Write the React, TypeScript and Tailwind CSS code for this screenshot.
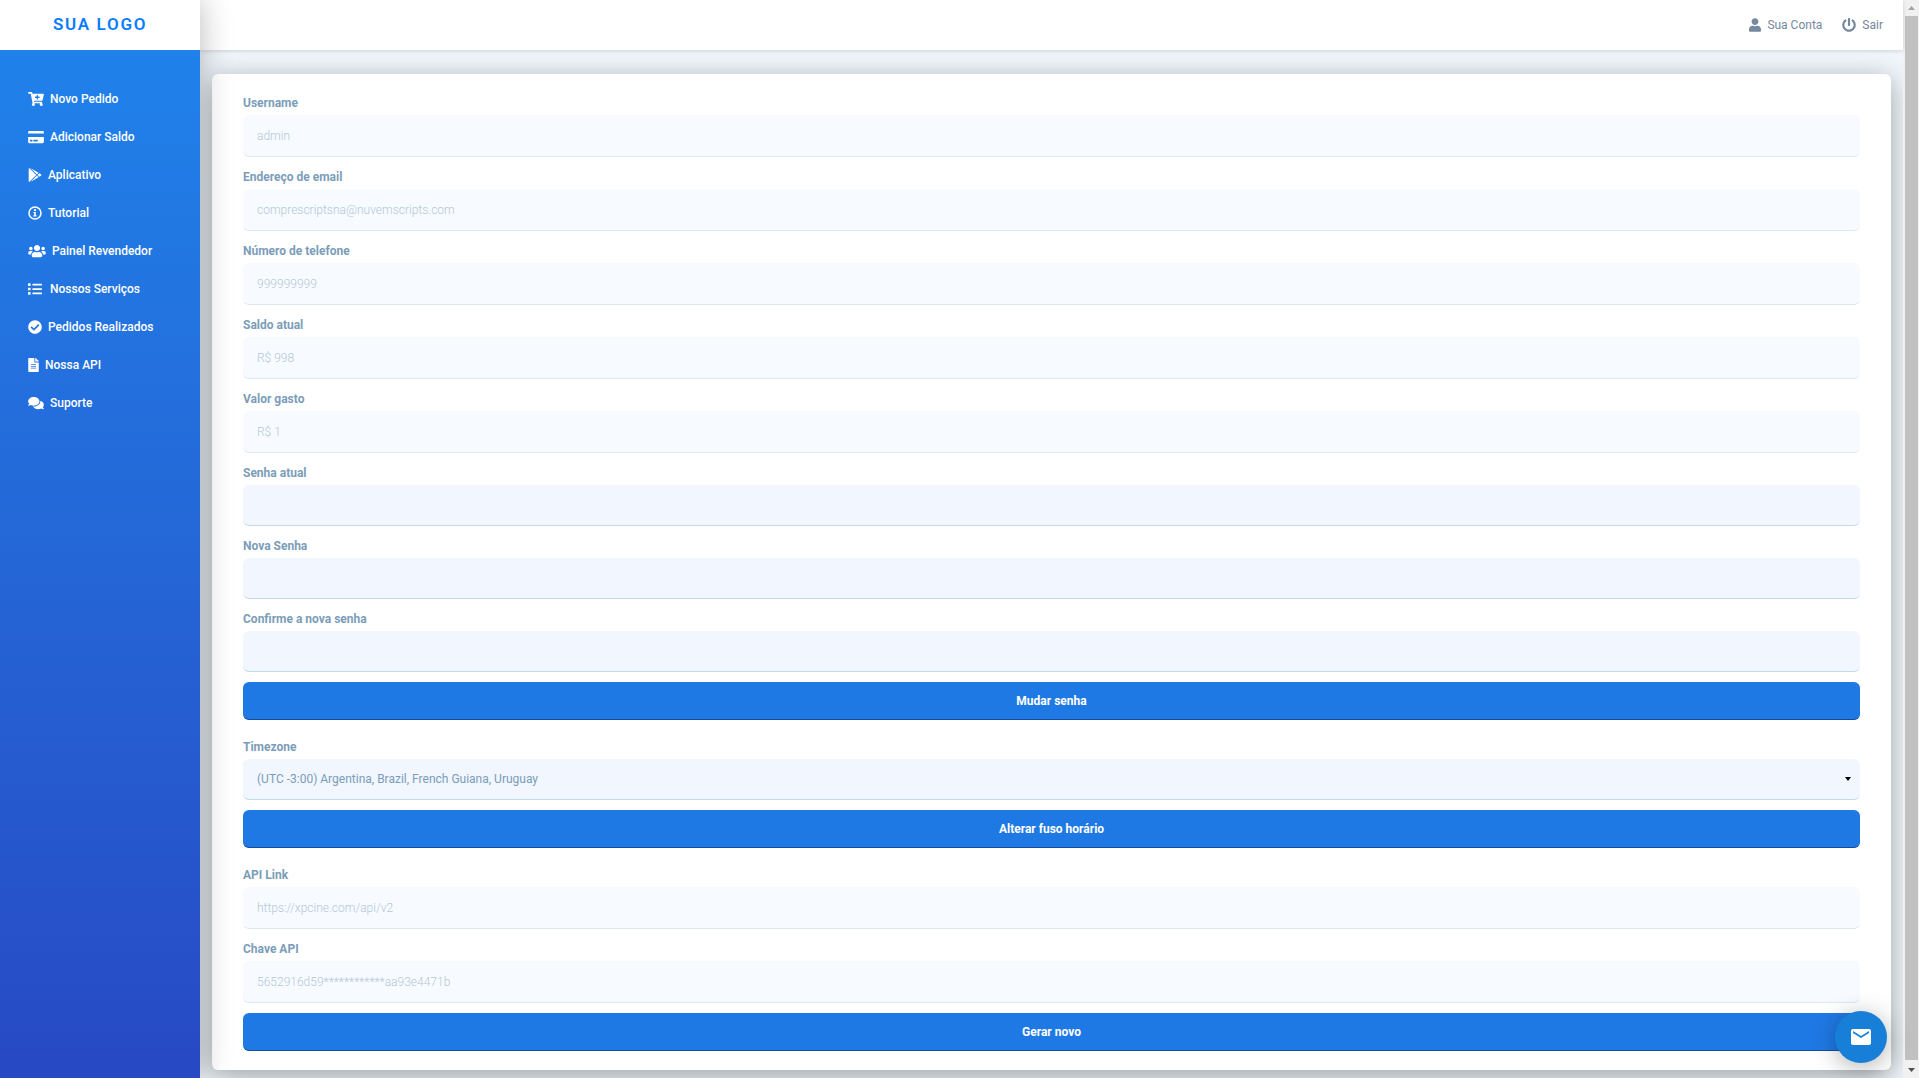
import type { ReactNode } from "react";
import {
  FaCartPlus,
  FaCheckCircle,
  FaComments,
  FaCreditCard,
  FaFileAlt,
  FaGooglePlay,
  FaList,
  FaPowerOff,
  FaUser,
  FaUsers,
} from "react-icons/fa";
import { MdEmail } from "react-icons/md";

// Circled "i" with a serifed stem
function InfoCircle({ className }: { className?: string }) {
  return (
    <svg viewBox="0 0 14 14" className={className} fill="none" aria-hidden="true">
      <circle cx="7" cy="7" r="6" stroke="currentColor" strokeWidth="1.5" />
      <path
        d="M7 3.1a1.1 1.1 0 1 0 0 2.2 1.1 1.1 0 0 0 0-2.2ZM5.4 5.9h2.4v3.4h.8v1.2H5.4V9.3h.8V7.1h-.8Z"
        fill="currentColor"
      />
    </svg>
  );
}

const menu = [
  { label: "Novo Pedido", icon: FaCartPlus, size: "w-4" },
  { label: "Adicionar Saldo", icon: FaCreditCard, size: "w-4" },
  { label: "Aplicativo", icon: FaGooglePlay, size: "w-3.5" },
  { label: "Tutorial", icon: InfoCircle, size: "w-3.5" },
  { label: "Painel Revendedor", icon: FaUsers, size: "w-[18px]" },
  { label: "Nossos Serviços", icon: FaList, size: "w-3.5 mr-0.5" },
  { label: "Pedidos Realizados", icon: FaCheckCircle, size: "w-3.5" },
  { label: "Nossa API", icon: FaFileAlt, size: "w-[11px]" },
  { label: "Suporte", icon: FaComments, size: "w-4" },
];

const account = [
  { id: "username", label: "Username", value: "admin" },
  { id: "email", label: "Endereço de email", value: "comprescriptsna@nuvemscripts.com" },
  { id: "phone", label: "Número de telefone", value: "999999999" },
  { id: "balance", label: "Saldo atual", value: "R$ 998" },
  { id: "spent", label: "Valor gasto", value: "R$ 1" },
];

const passwords = [
  { id: "current-password", label: "Senha atual" },
  { id: "new-password", label: "Nova Senha" },
  { id: "confirm-password", label: "Confirme a nova senha" },
];

const api = [
  { id: "api-link", label: "API Link", value: "https://xpcine.com/api/v2" },
  { id: "api-key", label: "Chave API", value: "5652916d59************aa93e4471b" },
];

function Field({ id, label, children }: { id: string; label: string; children: ReactNode }) {
  return (
    <div className="mb-2.5 flex flex-col">
      <label htmlFor={id} className="h-[22px] text-xs leading-5 font-bold text-[#7b9db9]">
        {label}
      </label>
      {children}
    </div>
  );
}

function ReadOnlyField({ id, label, value }: { id: string; label: string; value: string }) {
  return (
    <Field id={id} label={label}>
      <input
        id={id}
        type="text"
        value={value}
        disabled
        className="h-[42px] w-full rounded-md border-b border-[#dbe9f4] bg-[#f7fbff] px-3.5 text-xs font-light text-[#b4c7d7]"
      />
    </Field>
  );
}

function SubmitButton({ children }: { children: ReactNode }) {
  return (
    <button
      type="submit"
      className="h-[38px] w-full rounded-md border-b border-[#0f4f9c] bg-[#1f79e5] text-xs font-bold text-white"
    >
      {children}
    </button>
  );
}

function Sidebar() {
  return (
    <aside className="z-20 flex w-[200px] shrink-0 flex-col bg-linear-to-b from-[#1f84ec] to-[#2749c3] shadow-[0_0_30px_rgba(0,0,0,0.28)]">
      <a
        href="#"
        className="flex h-[50px] items-center justify-center bg-white text-[17px] font-semibold tracking-widest text-[#087cff]"
      >
        SUA LOGO
      </a>
      <nav className="flex flex-col pt-[30px]">
        {menu.map(({ label, icon: Icon, size }) => (
          <a
            key={label}
            href="#"
            className="flex h-[38px] items-center gap-1.5 pl-7 text-xs font-medium text-white"
          >
            <Icon className={`h-3.5 shrink-0 ${size}`} />
            {label}
          </a>
        ))}
      </nav>
    </aside>
  );
}

function Header() {
  return (
    <header className="z-10 flex h-[50px] shrink-0 items-center justify-end gap-5 bg-white px-5 text-xs text-[#75889d] shadow-[0_1px_4px_rgba(0,0,0,0.15)]">
      <a href="#" className="flex items-center gap-1.5">
        <FaUser className="h-3.5 w-3" />
        Sua Conta
      </a>
      <a href="#" className="flex items-center gap-1.5">
        <FaPowerOff className="size-3.5" />
        Sair
      </a>
    </header>
  );
}

function Scrollbar() {
  return (
    <div className="flex w-4 shrink-0 flex-col items-center bg-[#f1f1f1]" aria-hidden="true">
      <svg viewBox="0 0 16 16" className="size-4 shrink-0 text-[#a3a3a3]">
        <path d="M5 10h7L8.500 6Z" fill="currentColor" />
      </svg>
      <div className="w-[13px] flex-1 self-center bg-[#c1c1c1]" />
      <svg viewBox="0 0 16 18" className="h-[18px] w-4 shrink-0 text-[#505050]">
        <path d="M5 8h7l-3.500 4Z" fill="currentColor" />
      </svg>
    </div>
  );
}

export default function App() {
  return (
    <div className="flex h-screen overflow-hidden bg-[#f0f6fb] font-['Roboto',sans-serif]">
      <Sidebar />
      <div className="flex min-w-0 flex-1 flex-col">
        <Header />
        <main className="flex-1 px-3 pt-6">
          <section className="rounded-md bg-white px-[31px] py-[19px] shadow-[0_6px_28px_rgba(0,0,0,0.35)]">
            <form onSubmit={(e) => e.preventDefault()}>
              {account.map((field) => (
                <ReadOnlyField key={field.id} {...field} />
              ))}
              {passwords.map(({ id, label }) => (
                <Field key={id} id={id} label={label}>
                  <input
                    id={id}
                    type="password"
                    className="h-[41px] w-full rounded-md border-b border-[#c3dae9] bg-[#f1f6ff] px-3.5 text-xs"
                  />
                </Field>
              ))}
              <SubmitButton>Mudar senha</SubmitButton>
            </form>

            <form className="mt-[17px]" onSubmit={(e) => e.preventDefault()}>
              <Field id="timezone" label="Timezone">
                <div className="relative">
                  <select
                    id="timezone"
                    className="block h-[41px] w-full appearance-none rounded-md border-b border-[#c3dae9] bg-[#f1f6ff] px-3.5 text-xs text-[#7b9db9]"
                  >
                    <option>(UTC -3:00) Argentina, Brazil, French Guiana, Uruguay</option>
                  </select>
                  <svg
                    viewBox="0 0 6 4"
                    className="pointer-events-none absolute top-[18px] right-[9px] h-1 w-1.5"
                    aria-hidden="true"
                  >
                    <path d="M0 0h6L3 4Z" fill="black" />
                  </svg>
                </div>
              </Field>
              <SubmitButton>Alterar fuso horário</SubmitButton>
            </form>

            <form className="mt-[17px]" onSubmit={(e) => e.preventDefault()}>
              {api.map((field) => (
                <ReadOnlyField key={field.id} {...field} />
              ))}
              <SubmitButton>Gerar novo</SubmitButton>
            </form>
          </section>
        </main>
      </div>
      <Scrollbar />

      <button
        type="button"
        aria-label="Contato"
        className="fixed right-8 bottom-[15px] z-30 flex size-[52px] items-center justify-center rounded-full bg-[#177fd8] text-white shadow-[0_4px_24px_rgba(0,0,0,0.3)]"
      >
        <MdEmail className="size-6" />
      </button>
    </div>
  );
}
